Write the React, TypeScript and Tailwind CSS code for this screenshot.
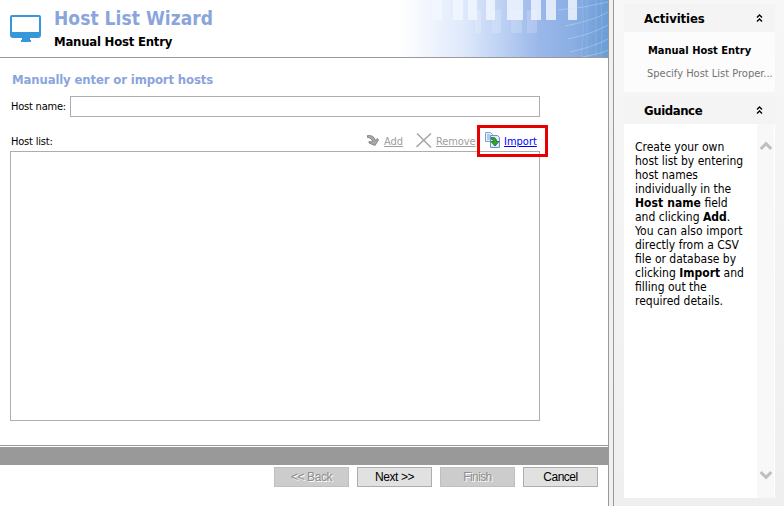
import React from "react";

const condensed = "font-['DejaVu_Sans_Condensed','DejaVu_Sans',sans-serif] [font-stretch:condensed]";

function Banner() {
  const bars = [
    [72, 10], [93, 10], [108, 9], [126, 9], [147, 16], [171, 10], [186, 10], [208, 9],
  ];
  const faint = [[115, 6], [132, 9], [151, 11], [167, 10]];
  return (
    <svg width="248" height="57" viewBox="0 0 248 57" className="block">
      <defs>
        <linearGradient id="sky" x1="0" x2="1">
          <stop offset="0.15" stopColor="#ffffff" />
          <stop offset="0.26" stopColor="#f3f7fd" />
          <stop offset="0.42" stopColor="#deE9fb" />
          <stop offset="0.56" stopColor="#bfd3f4" />
          <stop offset="0.72" stopColor="#9bb7ea" />
          <stop offset="0.86" stopColor="#8aaee4" />
          <stop offset="1" stopColor="#6b9dd6" />
        </linearGradient>
      </defs>
      <rect width="248" height="57" fill="url(#sky)" />
      {faint.map(([x, w]) => <rect key={x} x={x} y="10" width={w} height="23" fill="#fff" opacity="0.18" />)}
      {bars.map(([x, w]) => <rect key={x} x={x} width={w} height="20" fill="#f3f8ff" opacity="0.8" />)}
      <g fill="none" stroke="#c5e3f5">
        <path d="M198 10Q225 8 248 2M205 26Q232 21 248 12M208 39Q232 34 248 25M210 52Q236 46 248 39M222 57Q240 54 248 50" strokeWidth="1" opacity="0.42" />
        <path d="M222 0Q225 28 221 57M227 0V57M236 0V57M241 0Q243 28 241 57" strokeWidth="1" opacity="0.2" />
      </g>
    </svg>
  );
}

function Collapse() {
  return (
    <svg width="7" height="8" viewBox="0 0 7 8" fill="none" stroke="#000" strokeWidth="1.4">
      <path d="M1 3.500 3.500 1 6 3.500M1 7.500 3.500 5 6 7.500" />
    </svg>
  );
}

function WizardButton({ label, disabled, look }: { label: string; disabled?: boolean; look: string }) {
  return (
    <button
      disabled={disabled}
      className={`h-5 w-[75px] border font-['Liberation_Sans',Arial,sans-serif] text-[12px] leading-[18px] ${look} ${
        disabled ? "border-[#bfbfbf] bg-[#ccc] text-[#8c8c8c] [text-shadow:1px_1px_0_#fff]" : "border-[#adadad] bg-[#e1e1e1] text-black"
      }`}
    >
      {label}
    </button>
  );
}

function PanelTitle({ label, look }: { label: string; look: string }) {
  return (
    <div className="flex h-7 items-center justify-between bg-[#f4f4f4] pl-5 pr-3">
      <span className={`pt-[2px] text-[13px] font-bold leading-4 ${look}`}>{label}</span>
      <Collapse />
    </div>
  );
}

export default function App() {
  return (
    <div className={`flex h-[506px] w-[784px] overflow-hidden whitespace-nowrap bg-white text-black ${condensed}`}>
      <main className="flex w-[608px] flex-col">
        <header className="flex h-[58px] justify-between border-b border-[#999]">
          <div className="flex pl-[10px]">
            <svg width="31" height="28" viewBox="0 0 31 28" className="mt-[15px]">
              <path d="M2 0h27q2 0 2 2v18q0 3-3 3h-8v2h1v2H11v-2h1v-2H3q-3 0-3-3V2q0-2 2-2Z" fill="#3498db" />
              <rect x="2" y="2" width="27" height="15" fill="#fff" />
            </svg>
            <div className="pl-[13px] pt-[7px]">
              <h1 className="text-[19px] font-bold leading-[23px] tracking-[0.05px] text-[#8aa5dc]">Host List Wizard</h1>
              <h2 className="mt-[4px] text-[13px] font-bold leading-4 tracking-[-0.22px]">Manual Host Entry</h2>
            </div>
          </div>
          <Banner />
        </header>
        <section className="flex h-[387px] flex-col pl-[10px] pt-[14px]">
          <h3 className="pl-[2px] text-[13px] font-bold leading-4 tracking-[-0.14px] text-[#8aa5dc]">Manually enter or import hosts</h3>
          <div className="mt-[8px] flex h-[21px] w-[530px] items-center">
            <label className="w-[60px] pl-px pt-[2px] text-[11px] tracking-[-0.22px]">Host name:</label>
            <input className="h-[21px] flex-1 border border-[#abadb3] bg-white outline-none" />
          </div>
          <div className="relative z-10 mt-[8px] flex h-[32px] w-[538px] items-center justify-between">
            <span className="pl-px pt-[2px] text-[11px] tracking-[-0.2px]">Host list:</span>
            <div className="flex h-8 items-center text-[11px] text-[#a0a0a0]">
              <svg width="12" height="13" viewBox="0 0 12 13" className="-mt-px">
                <path d="M.5 1.500Q7.500 1 8 6.500L10.500 4.500 11.500 6 8 11.500 2 9V7.500L5.500 8Q5.500 4 .5 3.500Z" fill="#aaa" stroke="#777" strokeWidth=".8" />
              </svg>
              <span className="ml-[5px] w-[20px] pt-[2px] underline">Add</span>
              <svg width="16" height="15" viewBox="0 0 16 15" className="-mt-px ml-[12px]" fill="none" stroke="#aaa" strokeWidth="1.6">
                <path d="M1 .5 15 14.500M15 .5.500 14" />
              </svg>
              <span className="ml-[4px] w-[40px] pt-[2px] tracking-[-0.1px] underline">Remove</span>
              <div className="ml-px flex h-8 w-[71px] items-center border-[3px] border-[#e60000] pl-[5px]">
                <svg width="16" height="16" viewBox="0 0 16 16" className="-mt-[3px]">
                  <path d="M.5.5h5l2 2v7h-7Z" fill="#e6f2ff" stroke="#7ba4dc" />
                  <path d="M2 3h3M2 5h3M2 7h3" stroke="#7ba4dc" />
                  <path d="M5.500 3.500h7l2 2v10h-9Z" fill="#dcebff" stroke="#6d91cf" />
                  <path d="M6.500 5.500Q11.500 5 11.500 9.500H14L10 14 6 9.500H8.500Q9 7.500 6.500 7.500Z" fill="#35a52e" stroke="#126d16" strokeWidth=".8" />
                </svg>
                <span className="ml-[3px] pt-[2px] text-[#0000ff] underline">Import</span>
              </div>
            </div>
          </div>
          <div className="mt-[-6px] h-[270px] w-[530px] border border-[#abadb3] bg-white" />
        </section>
        <footer className="border-t border-[#999] pt-px">
          <div className="h-[18px] bg-[#999]" />
          <div className="flex justify-end gap-2 pr-[10px] pt-[2px]">
            <WizardButton label="<< Back" disabled look="tracking-[-0.4px]" />
            <WizardButton label="Next >>" look="tracking-[-0.4px]" />
            <WizardButton label="Finish" disabled look="tracking-[-0.6px]" />
            <WizardButton label="Cancel" look="tracking-[-0.5px]" />
          </div>
        </footer>
      </main>
      <div className="w-[6px] border-x border-[#999] bg-[#f0f0f0]" />
      <aside className="w-[170px] bg-gradient-to-b from-[#f7f7f7] to-[#efefef] pl-[10px] pr-[9px] pt-1">
        <PanelTitle label="Activities" look="tracking-[-0.1px]" />
        <div className="h-[60px] bg-[#fcfcfc] pt-[11px]">
          <div className="pl-6 text-[11px] font-bold leading-4">Manual Host Entry</div>
          <div className="mt-[7px] pl-[23px] text-[11px] leading-4 text-[#737373]">Specify Host List Proper...</div>
        </div>
        <div className="mt-1"><PanelTitle label="Guidance" look="tracking-[-0.4px]" /></div>
        <div className="flex h-[374px] bg-white">
          <p className="w-[133px] pl-[11px] pt-4 text-[12px] leading-[14px]">
            Create your own<br />host list by entering<br />host names<br />individually in the<br /><b className="tracking-[0.07px]">Host name</b> field<br />and clicking <b>Add</b>.<br /><span className="tracking-[0.1px]">You can also import</span><br />directly from a CSV<br />file or database by<br />clicking <b>Import</b> and<br />filling out the<br />required details.
          </p>
          <div className="mr-px flex w-[17px] flex-col items-center justify-between bg-[#f8f8f8] pb-[18px] pt-[17px]">
            <svg width="12" height="10" viewBox="0 0 12 10" fill="none" stroke="#bfbfbf" strokeWidth="3"><path d="m.7 8 5.300-5.300L11.300 8" /></svg>
            <svg width="12" height="10" viewBox="0 0 12 10" fill="none" stroke="#bfbfbf" strokeWidth="3"><path d="m.7 2 5.300 5.300L11.300 2" /></svg>
          </div>
        </div>
      </aside>
    </div>
  );
}
